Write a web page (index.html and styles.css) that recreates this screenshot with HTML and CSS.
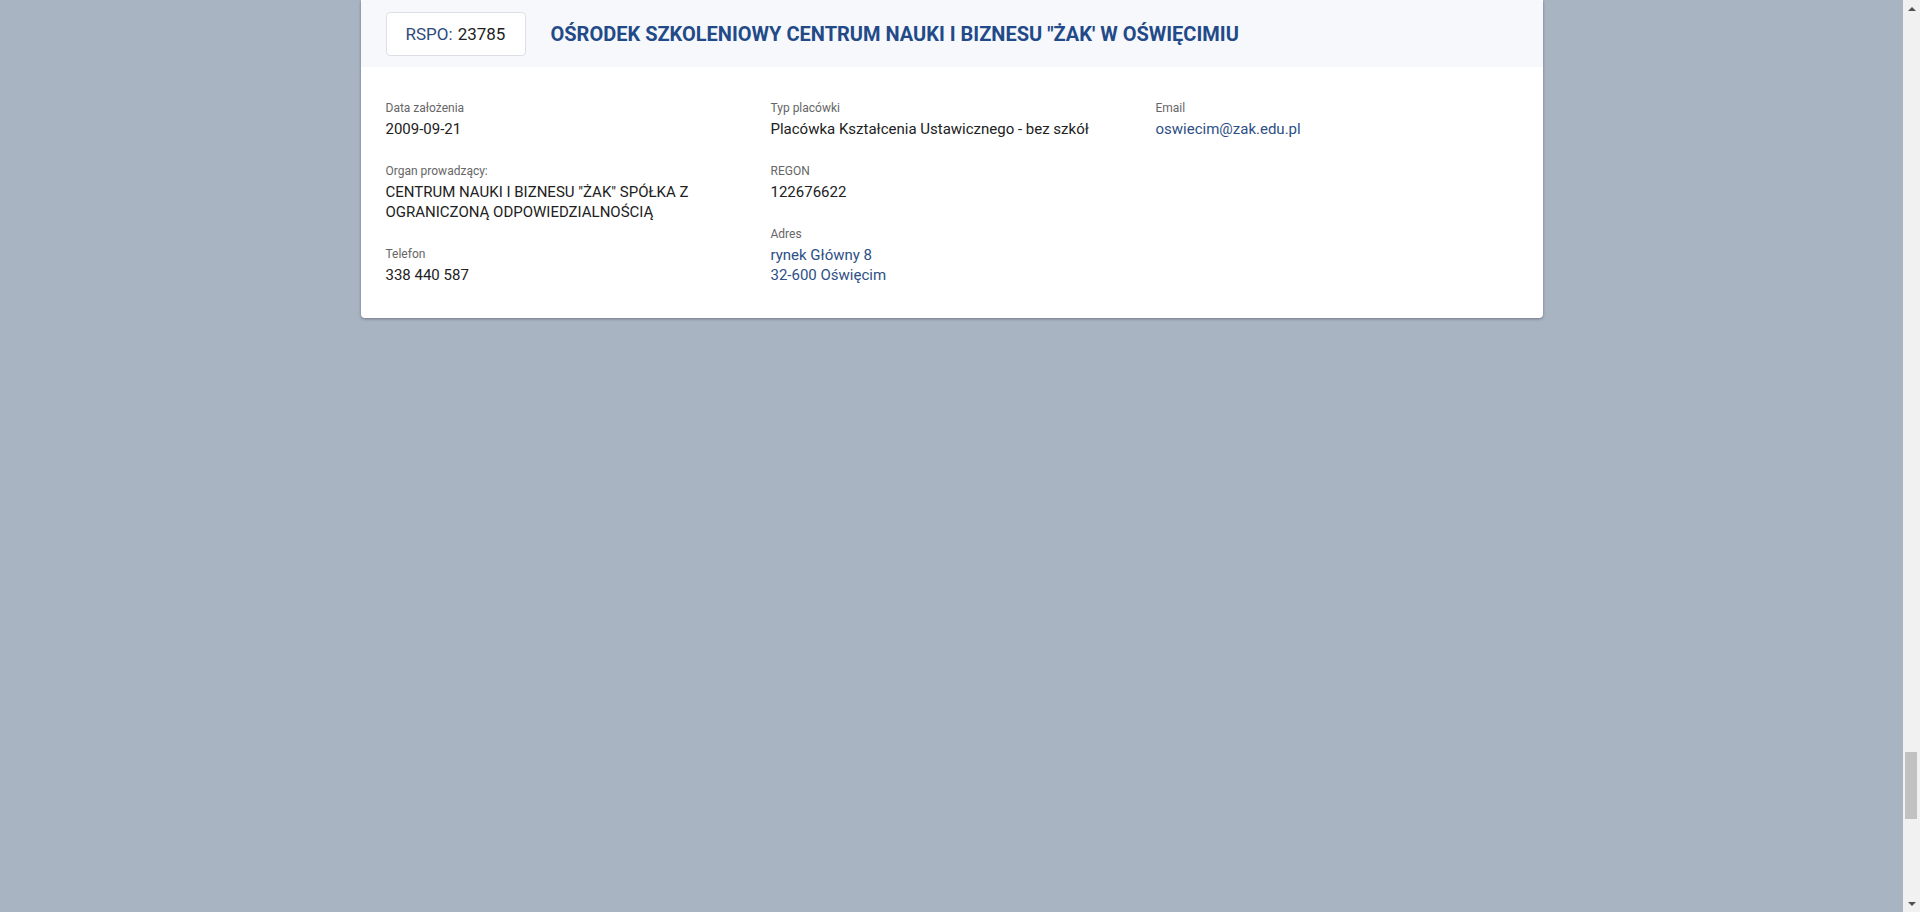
FILE: index.html
```html
<!DOCTYPE html>
<html lang="pl">
<head>
<meta charset="utf-8">
<title>Ośrodek Szkoleniowy Centrum Nauki i Biznesu "Żak" w Oświęcimiu</title>
<link rel="stylesheet" href="styles.css">
</head>
<body>
<div class="viewport">
  <main class="results">
    <article class="school-card">
      <header class="school-header">
        <div class="rspo-badge"><span class="rspo-label">RSPO:</span> 23785</div>
        <h2 class="school-name">OŚRODEK SZKOLENIOWY CENTRUM NAUKI I BIZNESU "ŻAK' W OŚWIĘCIMIU</h2>
      </header>
      <div class="school-body">
        <div class="col">
          <div class="field">
            <div class="field-label">Data założenia</div>
            <div class="field-value">2009-09-21</div>
          </div>
          <div class="field">
            <div class="field-label">Organ prowadzący:</div>
            <div class="field-value">CENTRUM NAUKI I BIZNESU "ŻAK" SPÓŁKA Z OGRANICZONĄ ODPOWIEDZIALNOŚCIĄ</div>
          </div>
          <div class="field">
            <div class="field-label">Telefon</div>
            <div class="field-value">338 440 587</div>
          </div>
        </div>
        <div class="col">
          <div class="field">
            <div class="field-label">Typ placówki</div>
            <div class="field-value">Placówka Kształcenia Ustawicznego - bez szkół</div>
          </div>
          <div class="field">
            <div class="field-label">REGON</div>
            <div class="field-value">122676622</div>
          </div>
          <div class="field">
            <div class="field-label">Adres</div>
            <a class="field-value link" href="#">rynek Główny 8<br>32-600 Oświęcim</a>
          </div>
        </div>
        <div class="col">
          <div class="field">
            <div class="field-label">Email</div>
            <a class="field-value link" href="#">oswiecim@zak.edu.pl</a>
          </div>
        </div>
      </div>
    </article>
  </main>
  <div class="scrollbar" aria-hidden="true">
    <div class="sb-button"><span class="sb-arrow-up"></span></div>
    <div class="sb-track"><div class="sb-thumb"></div></div>
    <div class="sb-button"><span class="sb-arrow-down"></span></div>
  </div>
</div>
</body>
</html>
```

FILE: styles.css
```css
html, body {
  margin: 0;
  height: 100%;
  overflow: hidden;
}
body {
  background: #a9b4c2;
  font-family: Roboto, "Noto Sans", "Liberation Sans", sans-serif;
  color: #212121;
}
.viewport {
  display: flex;
  height: 100%;
}
.results {
  flex: 1;
  min-width: 0;
}
.school-card {
  width: 1182px;
  margin: 0 auto;
  background: #ffffff;
  border-radius: 0 0 4px 4px;
  box-shadow: 0 1px 3px rgba(40, 50, 70, 0.45);
  overflow: hidden;
}
.school-header {
  height: 67px;
  display: flex;
  align-items: center;
  gap: 25px;
  padding: 0 25px;
  background: #f6f8fc;
  border-radius: 4px 4px 0 0;
}
.rspo-badge {
  box-sizing: border-box;
  height: 44px;
  width: 140px;
  display: flex;
  align-items: center;
  justify-content: center;
  gap: 5px;
  background: #ffffff;
  border: 1px solid #dcdfe5;
  border-radius: 4px;
  font-size: 17px;
  color: #222;
}
.rspo-label {
  color: #2c4a7c;
}
.school-name {
  margin: 0;
  font-size: 20px;
  font-weight: 700;
  color: #234a88;
}
.school-body {
  display: grid;
  grid-template-columns: 385px 385px 1fr;
  padding: 33px 25px 9px;
}
.col {
  display: flex;
  flex-direction: column;
  padding-right: 10px;
}
.field {
  display: flex;
  flex-direction: column;
  margin-bottom: 24px;
}
.field-label {
  font-size: 12px;
  line-height: 16px;
  color: #666666;
  margin-bottom: 3px;
}
.field-value {
  font-size: 15px;
  line-height: 20px;
  color: #212121;
}
.link {
  color: #2d4f85;
  text-decoration: none;
}

/* window scrollbar */
.scrollbar {
  width: 17px;
  flex: none;
  display: flex;
  flex-direction: column;
  background: #f1f1f1;
}
.sb-button {
  height: 17px;
  display: flex;
  align-items: center;
  justify-content: center;
}
.sb-arrow-up,
.sb-arrow-down {
  width: 0;
  height: 0;
  border-left: 4px solid transparent;
  border-right: 4px solid transparent;
}
.sb-arrow-up {
  border-bottom: 4px solid #505050;
}
.sb-arrow-down {
  border-top: 4px solid #505050;
}
.sb-track {
  flex: 1;
  padding-top: 735px;
}
.sb-thumb {
  height: 67px;
  margin: 0 3px 0 2px;
  background: #c1c1c1;
}
```
